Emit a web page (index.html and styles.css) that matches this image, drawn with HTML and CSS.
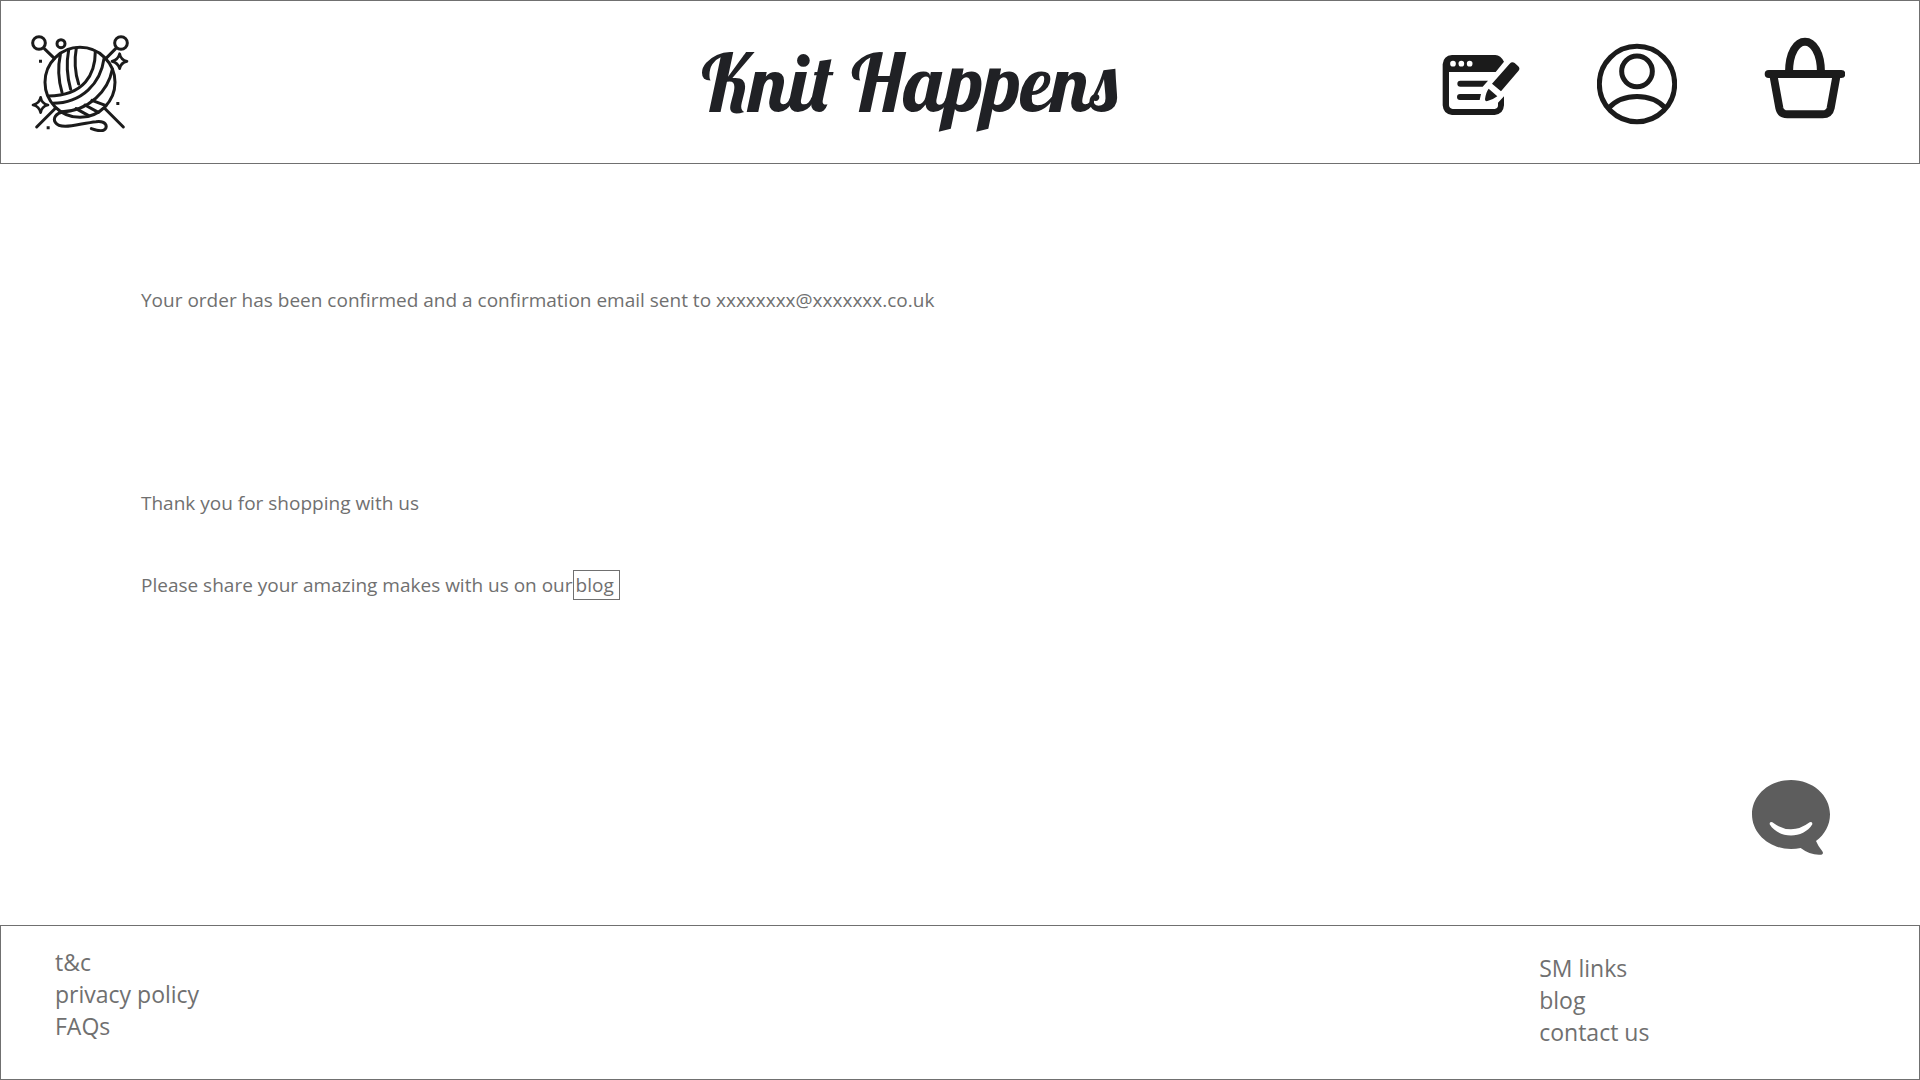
FILE: index.html
```html
<!DOCTYPE html>
<html lang="en">
<head>
  <meta charset="utf-8">
  <meta name="viewport" content="width=device-width, initial-scale=1">
  <title>Knit Happens</title>
  <link rel="stylesheet" href="styles.css">
</head>
<body>
  <header class="site-header">
    <a class="logo" href="#" aria-label="Home">
      <svg class="icon icon-logo" viewBox="90 96 300 300">
        <g fill="none" stroke="#1b1b1b" stroke-width="9" stroke-linecap="round">
          <circle cx="117" cy="129" r="19"/>
          <circle cx="363" cy="129" r="19"/>
          <circle cx="183" cy="131" r="12"/>
          <circle cx="240" cy="247" r="105"/>
          <path d="M133 146l30 29M347 146l-29 29M167 324l-57 57M313 324l57 57"/>
          <path d="M181 164Q169 220 186 277M206 150Q195 208 212 268M229 144Q219 200 236 252"/>
          <path d="M286 154C286 222 254 287 145 288M312 176C302 250 246 309 158 310M337 208C325 270 270 334 180 336"/>
          <path d="M276 301l42 16M255 315l40 22M228 326l38 21"/>
          <path d="M188 336C168 340 158 355 166 367C182 392 235 371 288 365C317 361 323 378 315 388C307 397 288 391 274 386"/>
        </g>
        <g fill="none" stroke="#1b1b1b" stroke-width="8" stroke-linejoin="round">
          <path d="M359 161Q362 180 381 184Q362 188 359 206Q354 188 336 184Q354 180 359 161Z"/>
          <path d="M122 292Q125 311 144 315Q125 319 122 338Q118 319 99 315Q118 311 122 292Z"/>
        </g>
        <path fill="#1b1b1b" d="M117 179h9v9h-9zM349 306h9v9h-9zM140 379h9v9h-9z"/>
      </svg>
    </a>
    <h1 class="brand">Knit Happens</h1>
    <nav class="actions" aria-label="Account">
      <a href="#" aria-label="Blog">
        <svg class="icon icon-action" viewBox="63 45 240 282">
          <path fill="#1b1b1b" fill-rule="evenodd" d="M96 105H226Q242 106 252 125L227 156H87V256Q88 266 98 267H224Q234 266 234 256V248L252 229V256Q250 283 224 285H96Q70 283 68 256V133Q70 107 96 105Z"/>
          <g fill="#fff"><circle cx="99" cy="131" r="8.500"/><circle cx="124" cy="131" r="8.500"/><circle cx="149" cy="131" r="8.500"/></g>
          <path fill="#1b1b1b" d="M121 182H204L188 200H121A9 9 0 0 1 121 182ZM120 222H183L179 240H120A9 9 0 0 1 120 222Z"/>
          <path fill="#1b1b1b" d="M216 191L269 131Q276 124 284 129L294 138Q302 145 295 153L243 214ZM206 206L232 229Q218 240 200 244Q195 244 195 238Q197 218 206 206Z"/>
        </svg>
      </a>
      <a href="#" aria-label="Account">
        <svg class="icon icon-action" viewBox="531 45 240 282">
          <g fill="none" stroke="#1b1b1b" stroke-width="15">
            <circle cx="651" cy="192" r="113"/>
            <circle cx="651" cy="154" r="46"/>
            <path d="M566 264C609 218 693 218 736 264"/>
          </g>
        </svg>
      </a>
      <a href="#" aria-label="Basket">
        <svg class="icon icon-basket" viewBox="39 45 276 282">
          <g fill="none" stroke="#1b1b1b" stroke-width="24" stroke-linecap="round">
            <path d="M86 162H304"/>
            <path stroke-linecap="butt" d="M147 158C147 34 243 34 243 158M101 170L118 264Q122 283 142 283H248Q268 283 272 264L289 170"/>
          </g>
        </svg>
      </a>
    </nav>
  </header>

  <main class="content">
    <p class="confirmation">Your order has been confirmed and a confirmation email sent to xxxxxxxx@xxxxxxx.co.uk</p>
    <p class="thanks">Thank you for shopping with us</p>
    <p class="share">Please share your amazing makes with us on our <a class="blog-link" href="#">blog</a></p>
    <button class="chat" type="button" aria-label="Chat with us">
      <svg class="icon icon-chat" viewBox="96 60 234 225">
        <path fill="#5d5d5d" d="M213 60C278 60 330 106 330 163C330 196 314 224 288 243Q294 258 307 274Q312 282 304 284Q272 287 242 264Q228 267 213 267C148 267 96 221 96 163C96 106 148 60 213 60Z"/>
        <path fill="#fff" d="M157 187Q213 229 269 187Q278 184 277 193C250 238 176 238 149 193Q148 184 157 187Z"/>
      </svg>
    </button>
  </main>

  <footer class="site-footer">
    <ul class="links">
      <li><a href="#">t&amp;c</a></li>
      <li><a href="#">privacy policy</a></li>
      <li><a href="#">FAQs</a></li>
    </ul>
    <ul class="links links-social">
      <li><a href="#">SM links</a></li>
      <li><a href="#">blog</a></li>
      <li><a href="#">contact us</a></li>
    </ul>
  </footer>
</body>
</html>
```
FILE: styles.css
```css
* {
  box-sizing: border-box;
}

body {
  display: flex;
  flex-direction: column;
  min-height: 100vh;
  margin: 0;
  background: #fff;
  color: #707070;
  font-family: "Segoe UI", "Open Sans", "Noto Sans", sans-serif;
  font-size: 19px;
  line-height: 28px;
}

a {
  color: inherit;
  text-decoration: none;
}

.icon {
  display: block;
}

.site-header {
  display: grid;
  grid-template-columns: 671fr auto 727fr;
  align-items: center;
  min-height: 164px;
  padding: 0 74px 0 29px;
  border: 1px solid #707070;
}

.logo {
  justify-self: start;
}

.icon-logo {
  width: 100px;
  height: 100px;
}

.brand {
  margin: 0;
  color: #202125;
  font-family: Lobster, "Liberation Serif", serif;
  font-size: 80px;
  font-weight: 400;
  line-height: 84px;
  white-space: nowrap;
}

.actions {
  display: flex;
  justify-content: flex-end;
  gap: 76px;
}

.icon-action {
  width: 80px;
  height: 94px;
}

.icon-basket {
  width: 92px;
  height: 94px;
}

.content {
  position: relative;
  flex: 1;
  padding: 122px 141px 0;
}

.content p {
  margin: 0;
}

.content .confirmation {
  margin-bottom: 175px;
}

.content .thanks {
  margin-bottom: 53px;
}

.share {
  display: flex;
  align-items: center;
}

.blog-link {
  padding: 0 5px 0 2px;
  border: 1px solid #707070;
}

.chat {
  position: absolute;
  right: 90px;
  bottom: 70px;
  padding: 0;
  border: 0;
  background: none;
  cursor: pointer;
}

.icon-chat {
  width: 78px;
  height: 75px;
}

.site-footer {
  display: flex;
  justify-content: space-between;
  min-height: 155px;
  padding: 20px 54px;
  border: 1px solid #707070;
  font-size: 23px;
  line-height: 32px;
}

.links {
  margin: 0;
  padding: 0;
  list-style: none;
}

.links-social {
  flex-basis: 18%;
  padding-top: 6px;
}
```
